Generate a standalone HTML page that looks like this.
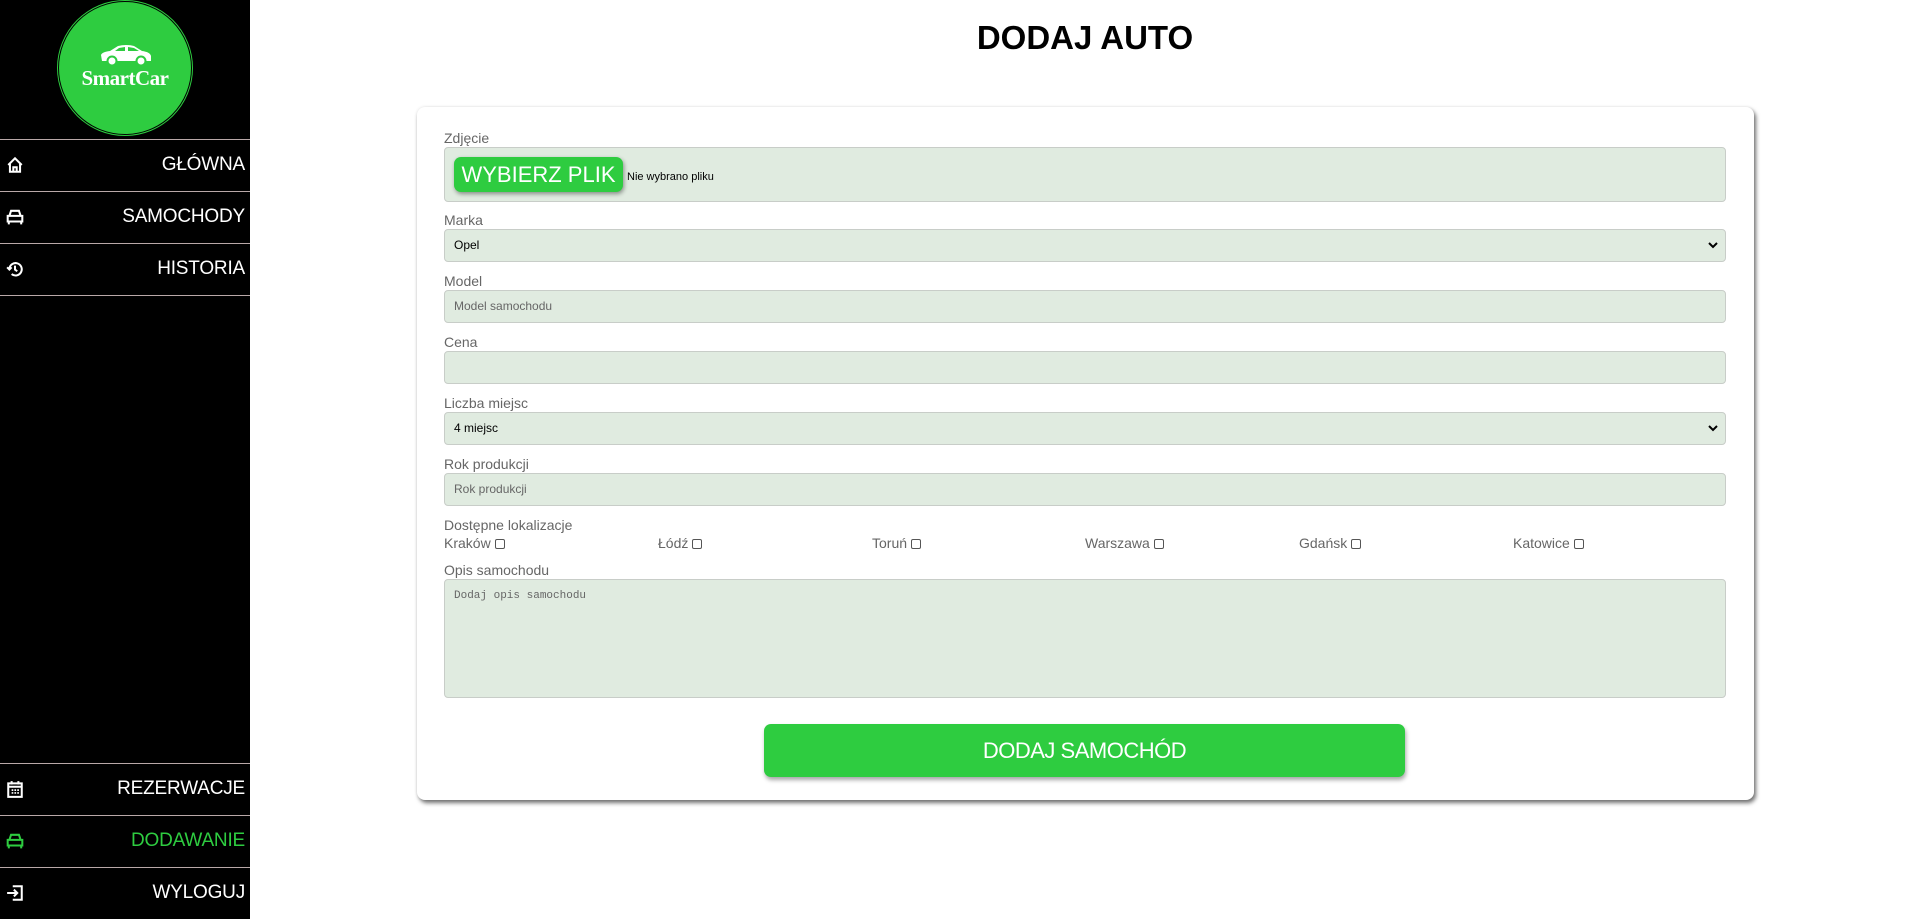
<!DOCTYPE html>
<html><head><meta charset="utf-8">
<style>
*{box-sizing:border-box;margin:0;padding:0}
body{width:1920px;height:919px;background:#fff;font-family:"Liberation Sans",sans-serif;position:relative;overflow:hidden}
.side{position:absolute;left:0;top:0;width:250px;height:919px;background:#000}
.logo{position:absolute;left:58px;top:1px;width:134px;height:134px;border-radius:50%;background:#2ecc40;border:1px solid #000;box-shadow:0 0 0 1px #2ecc40}
.logo .t{position:absolute;top:64px;width:100%;text-align:center;color:#fff;font-family:"Liberation Serif",serif;font-weight:bold;font-size:21px;letter-spacing:-0.5px}
.nav{position:absolute;left:0;width:250px;height:52px;border-top:1px solid #b9a8a8;color:#fff;font-size:19px;text-align:right;padding-right:5px;line-height:50px;letter-spacing:-0.2px}
.nav svg{position:absolute;left:6px;top:16px}
.nav.g{color:#2ecc40}
h1{position:absolute;left:250px;width:1670px;top:19px;text-align:center;font-size:33px;font-weight:bold;color:#000}
.card{position:absolute;left:417px;top:107px;width:1337px;height:693px;background:#fff;border-radius:8px;box-shadow:2px 3px 4px rgba(0,0,0,.55),0 0 3px rgba(0,0,0,.1)}
.lbl{position:absolute;left:444px;font-size:14px;color:#666}
.in{position:absolute;left:444px;width:1282px;background:#e0ebe0;border:1px solid #c8cdc8;border-radius:4px;font-size:12px;color:#666;padding-left:9px;line-height:31px;height:33px}
.in.b{color:#000}
.chev{position:absolute;right:6px;top:0}
.fb{position:absolute;left:454px;top:157px;width:169px;height:35px;background:#2ecc40;border-radius:7px;color:#fff;font-size:22px;text-align:center;line-height:35px;box-shadow:1px 2px 4px rgba(0,0,0,.4)}
.cb{position:absolute;top:535px;font-size:14px;color:#666}
.cb i{display:inline-block;width:10px;height:10px;border:1px solid #555;border-radius:2px;margin-left:4px;vertical-align:-1px}
.btn{position:absolute;left:764px;top:724px;width:641px;height:53px;background:#2ecc40;border-radius:7px;color:#fff;font-size:22px;text-align:center;line-height:53px;box-shadow:1px 3px 4px rgba(0,0,0,.35);letter-spacing:-0.5px}
</style></head><body>
<div class="side">
<div class="logo">
<svg style="position:absolute;left:39px;top:42px" width="56" height="22" viewBox="0 0 56 22"><path d="M4 17 L3 11 Q4 8 12 7 L20 2 Q28 0 36 2 L44 7 Q52 8 53 12 L53 17 Z" fill="#fff"/><path d="M21 4 L27 3 L27 7 L17 7 Z M30 3 L36 4 L41 7 L30 7 Z" fill="#2ecc40"/><circle cx="14" cy="17" r="4.5" fill="#fff" stroke="#2ecc40" stroke-width="2"/><circle cx="43" cy="17" r="4.5" fill="#fff" stroke="#2ecc40" stroke-width="2"/></svg>
<div class="t">SmartCar</div></div>
<div class="nav" style="top:139px"><svg width="18" height="18" viewBox="0 0 16 16"><path d="M2 8 L8 2 L14 8 M3.5 7 V14 H12.5 V7 M6.5 14 V10 H9.5 V14" fill="none" stroke="#fff" stroke-width="1.8"/></svg>GŁÓWNA</div>
<div class="nav" style="top:191px"><svg width="18" height="18" viewBox="0 0 16 16"><path d="M3 7 L4.5 2.5 H11.5 L13 7 M1.5 7 H14.5 V12 H1.5 Z M2.5 12 V14.5 M13.5 12 V14.5" fill="none" stroke="#fff" stroke-width="1.8"/><circle cx="4.5" cy="9.5" r="1" fill="#000"/><circle cx="11.5" cy="9.5" r="1" fill="#000"/></svg>SAMOCHODY</div>
<div class="nav" style="top:243px"><svg width="18" height="18" viewBox="0 0 16 16"><path d="M3 8 A5.5 5.5 0 1 1 5 12.5 M1 6.5 L3 8.5 L5 6.5 M8 5 V8.5 L10 10" fill="none" stroke="#fff" stroke-width="1.8"/></svg>HISTORIA</div>
<div class="nav" style="top:295px;height:1px"></div>
<div class="nav" style="top:763px"><svg width="18" height="18" viewBox="0 0 16 16"><rect x="2" y="3" width="12" height="12" fill="none" stroke="#fff" stroke-width="1.8"/><path d="M2 6 H14 M5 1 V4 M11 1 V4" stroke="#fff" stroke-width="1.8"/><path d="M5 9h1.5M7.5 9h1.5M10 9h1.5M5 11.5h1.5M7.5 11.5h1.5M10 11.5h1.5" stroke="#fff" stroke-width="1.5"/></svg>REZERWACJE</div>
<div class="nav g" style="top:815px"><svg width="18" height="18" viewBox="0 0 16 16"><path d="M3 7 L4.5 2.5 H11.5 L13 7 M1.5 7 H14.5 V12 H1.5 Z M2.5 12 V14.5 M13.5 12 V14.5" fill="none" stroke="#2ecc40" stroke-width="1.8"/><circle cx="4.5" cy="9.5" r="1" fill="#000"/><circle cx="11.5" cy="9.5" r="1" fill="#000"/></svg>DODAWANIE</div>
<div class="nav" style="top:867px"><svg width="18" height="18" viewBox="0 0 16 16"><path d="M6 2 H14 V14 H6 M1 8 H10 M7 5 L10 8 L7 11" fill="none" stroke="#fff" stroke-width="1.8"/></svg>WYLOGUJ</div>
</div>
<h1>DODAJ AUTO</h1>
<div class="card"></div>
<div class="lbl" style="top:130px">Zdjęcie</div>
<div class="in" style="top:147px;height:55px"></div>
<div class="fb">WYBIERZ PLIK</div>
<div style="position:absolute;left:627px;top:171px;font-size:11px;color:#000">Nie wybrano pliku</div>
<div class="lbl" style="top:212px">Marka</div>
<div class="in b" style="top:229px">Opel<svg class="chev" width="12" height="31" viewBox="0 0 12 31"><path d="M2 13 L6 17 L10 13" fill="none" stroke="#000" stroke-width="2"/></svg></div>
<div class="lbl" style="top:273px">Model</div>
<div class="in" style="top:290px">Model samochodu</div>
<div class="lbl" style="top:334px">Cena</div>
<div class="in" style="top:351px"></div>
<div class="lbl" style="top:395px">Liczba miejsc</div>
<div class="in b" style="top:412px">4 miejsc<svg class="chev" width="12" height="31" viewBox="0 0 12 31"><path d="M2 13 L6 17 L10 13" fill="none" stroke="#000" stroke-width="2"/></svg></div>
<div class="lbl" style="top:456px">Rok produkcji</div>
<div class="in" style="top:473px">Rok produkcji</div>
<div class="lbl" style="top:517px">Dostępne lokalizacje</div>
<div class="cb" style="left:444px">Kraków<i></i></div>
<div class="cb" style="left:658px">Łódź<i></i></div>
<div class="cb" style="left:872px">Toruń<i></i></div>
<div class="cb" style="left:1085px">Warszawa<i></i></div>
<div class="cb" style="left:1299px">Gdańsk<i></i></div>
<div class="cb" style="left:1513px">Katowice<i></i></div>
<div class="lbl" style="top:562px">Opis samochodu</div>
<div class="in" style="top:579px;height:119px;font-family:'Liberation Mono',monospace;font-size:11px;line-height:14px;padding-top:9px">Dodaj opis samochodu</div>
<div class="btn">DODAJ SAMOCHÓD</div>
</body></html>
